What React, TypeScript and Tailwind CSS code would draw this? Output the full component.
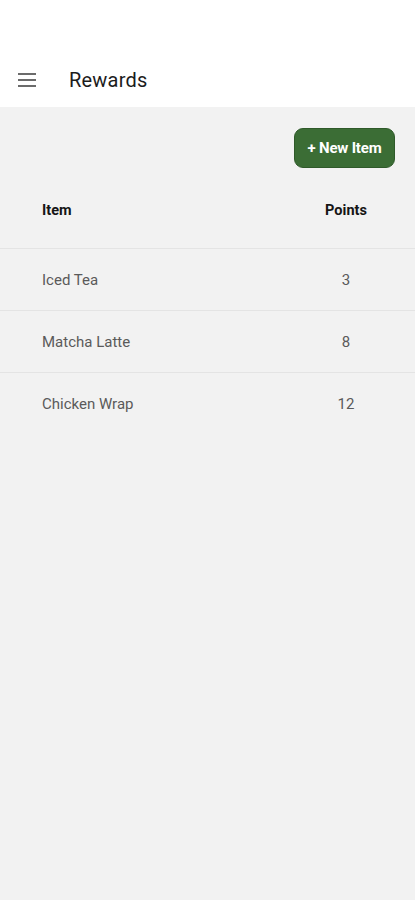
const rewards = [
  { name: "Iced Tea", points: 3 },
  { name: "Matcha Latte", points: 8 },
  { name: "Chicken Wrap", points: 12 },
];

function MenuIcon() {
  return (
    <svg width="18" height="14" viewBox="0 0 18 14" className="text-[#6b6b6b]">
      <rect x="0" y="0" width="18" height="2" fill="currentColor" />
      <rect x="0" y="6" width="18" height="2" fill="currentColor" />
      <rect x="0" y="12" width="18" height="2" fill="currentColor" />
    </svg>
  );
}

export default function App() {
  return (
    <div className="min-h-[900px] bg-[#f2f2f2] font-['Roboto',sans-serif]">
      <header className="h-[107px] bg-white flex items-end pb-[14px]">
        <div className="flex items-center h-[26px]">
          <button className="pl-[18px] pr-[33px] flex items-center">
            <MenuIcon />
          </button>
          <h1 className="text-[20px] text-[#1c1c1c] tracking-[0.2px]">Rewards</h1>
        </div>
      </header>

      <div className="flex justify-end pt-[21px] pr-[20px]">
        <button className="h-[40px] w-[101px] rounded-[9px] bg-[#3b6d35] border border-[#2f5a2a] text-white text-[15px] font-bold tracking-[-0.2px]">
          + New Item
        </button>
      </div>

      <div className="mt-[5px]">
        <div className="flex items-center h-[76px] border-b border-[#e4e4e4] text-[14.5px] font-bold text-[#151515]">
          <span className="flex-1 pl-[42px]">Item</span>
          <span className="w-[100px] pr-[38px] text-center">Points</span>
        </div>
        {rewards.map((r, i) => (
          <div
            key={r.name}
            className={
              "flex items-center h-[62px] pt-[1px] text-[15px] text-[#5a5a5a] " +
              (i < rewards.length - 1 ? "border-b border-[#e4e4e4]" : "")
            }
          >
            <span className="flex-1 pl-[42px]">{r.name}</span>
            <span className="w-[100px] pr-[38px] text-center">{r.points}</span>
          </div>
        ))}
      </div>
    </div>
  );
}
